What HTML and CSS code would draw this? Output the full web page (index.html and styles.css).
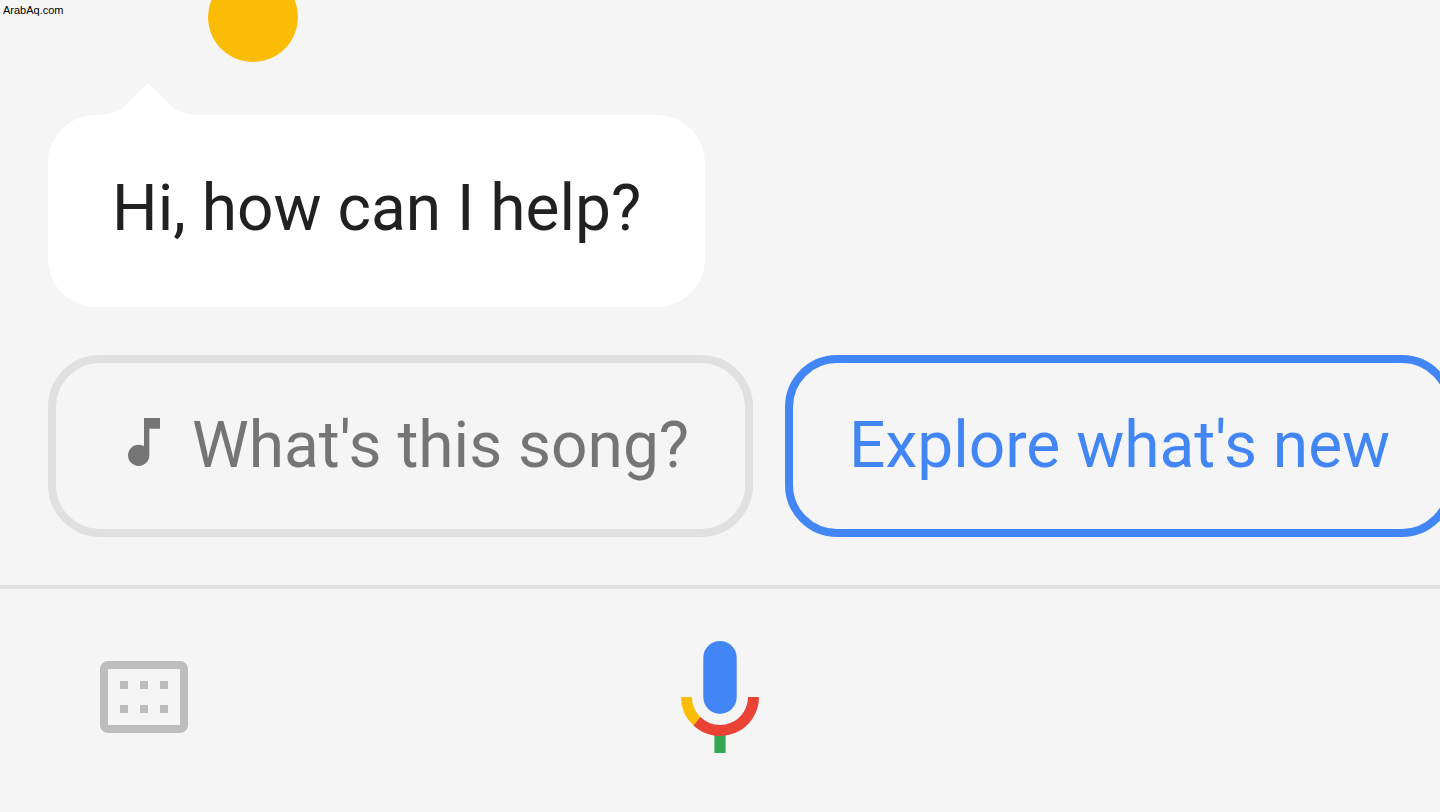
FILE: index.html
```html
<!DOCTYPE html>
<html lang="en">
<head>
    <meta charset="UTF-8">
    <meta name="viewport" content="width=device-width, initial-scale=1.0">
    <title>Assistant</title>
    <link rel="stylesheet" href="styles.css">
</head>
<body>
    <span class="watermark">ArabAq.com</span>

    <header class="header">
        <div class="dot"></div>
    </header>

    <main class="chat">
        <div class="message">
            <svg class="message-tail" viewBox="0 0 96 32" aria-hidden="true">
                <path d="M0 32C11 32 20 28 28 20L48 0L68 20C76 28 85 32 96 32Z" fill="#fff"/>
            </svg>
            <p class="bubble">Hi, how can I help?</p>
        </div>

        <div class="chips">
            <button class="chip" type="button">
                <svg class="chip-icon" viewBox="0 0 24 24" aria-hidden="true">
                    <path d="M12 3v10.55c-.59-.34-1.27-.55-2-.55-2.21 0-4 1.79-4 4s1.79 4 4 4 4-1.79 4-4V7h4V3h-6z" fill="currentColor"/>
                </svg>
                <span>What's this song?</span>
            </button>
            <button class="chip chip-blue" type="button">Explore what's new</button>
        </div>
    </main>

    <footer class="input-bar">
        <button class="icon-button" type="button" aria-label="Keyboard">
            <svg class="keyboard-icon" viewBox="0 0 88 72" aria-hidden="true">
                <path fill="#bdbdbd" fill-rule="evenodd" d="M8 0H80A8 8 0 0 1 88 8V64A8 8 0 0 1 80 72H8A8 8 0 0 1 0 64V8A8 8 0 0 1 8 0ZM8 8V64H80V8Z"/>
                <path fill="#bdbdbd" d="M20 20h8v8h-8zM40 20h8v8h-8zM60 20h8v8h-8zM20 44h8v8h-8zM40 44h8v8h-8zM60 44h8v8h-8z"/>
            </svg>
        </button>
        <button class="icon-button" type="button" aria-label="Voice input">
            <svg class="mic-icon" viewBox="0 0 78 112" aria-hidden="true">
                <rect x="22.3" y="0" width="33.4" height="72.8" rx="16.7" fill="#4285f4"/>
                <path d="M33.4 94h11.2v18H33.4z" fill="#34a853"/>
                <path d="M0 56H11A28 28 0 0 0 19.5 76.1L12.4 84.5A39 39 0 0 1 0 56Z" fill="#fbbc05"/>
                <path d="M78 56H67A28 28 0 0 1 19.5 76.1L12.4 84.5A39 39 0 0 0 78 56Z" fill="#ea4335"/>
            </svg>
        </button>
    </footer>
</body>
</html>
```

FILE: styles.css
```css
* {
    box-sizing: border-box;
}

body {
    margin: 0;
    min-height: 100vh;
    font-family: Roboto, Arial, sans-serif;
    background-color: #f5f5f5;
    color: #212121;
    overflow: hidden; /* Chips run off the right edge */
}

button {
    background: none;
    font-family: inherit;
    cursor: pointer;
}

svg {
    display: block;
    flex-shrink: 0;
}

.watermark {
    position: absolute;
    top: 4px;
    left: 3px;
    font-family: "Liberation Sans", Arial, sans-serif;
    font-size: 11px;
    line-height: 12px;
    color: #000;
}

.header {
    display: flex;
    align-items: flex-end;
    height: 62px;
    padding-left: 208px;
    overflow: hidden;
}

.dot {
    width: 90px;
    height: 90px;
    flex-shrink: 0;
    border-radius: 50%;
    background-color: #fbbc05;
}

.chat {
    padding: 21px 48px 48px;
}

.message {
    display: flex;
    flex-direction: column;
    align-items: flex-start;
}

.message-tail {
    width: 96px;
    height: 32px;
    margin-left: 52px;
}

.bubble {
    margin: 0;
    padding: 58px 64px 62px;
    border-radius: 48px;
    background-color: #fff;
    font-size: 64px;
    line-height: 72px;
}

.chips {
    display: flex;
    gap: 32px;
    margin-top: 48px;
}

.chip {
    display: flex;
    align-items: flex-start;
    flex-shrink: 0;
    gap: 16px;
    padding: 47px 56px;
    border: 8px solid #e0e0e0;
    border-radius: 52px;
    font-size: 64px;
    line-height: 72px;
    white-space: nowrap;
    color: #757575;
}

.chip-blue {
    border-color: #4285f4;
    color: #4285f4;
}

.chip-icon {
    width: 64px;
    height: 64px;
}

.input-bar {
    display: grid;
    grid-template-columns: 1fr auto 1fr;
    align-items: center;
    padding: 52px 100px;
    border-top: 4px solid #e0e0e0;
}

.icon-button {
    justify-self: start;
    padding: 0;
    border: none;
}

.keyboard-icon {
    width: 88px;
    height: 72px;
}

.mic-icon {
    width: 78px;
    height: 112px;
}
```
